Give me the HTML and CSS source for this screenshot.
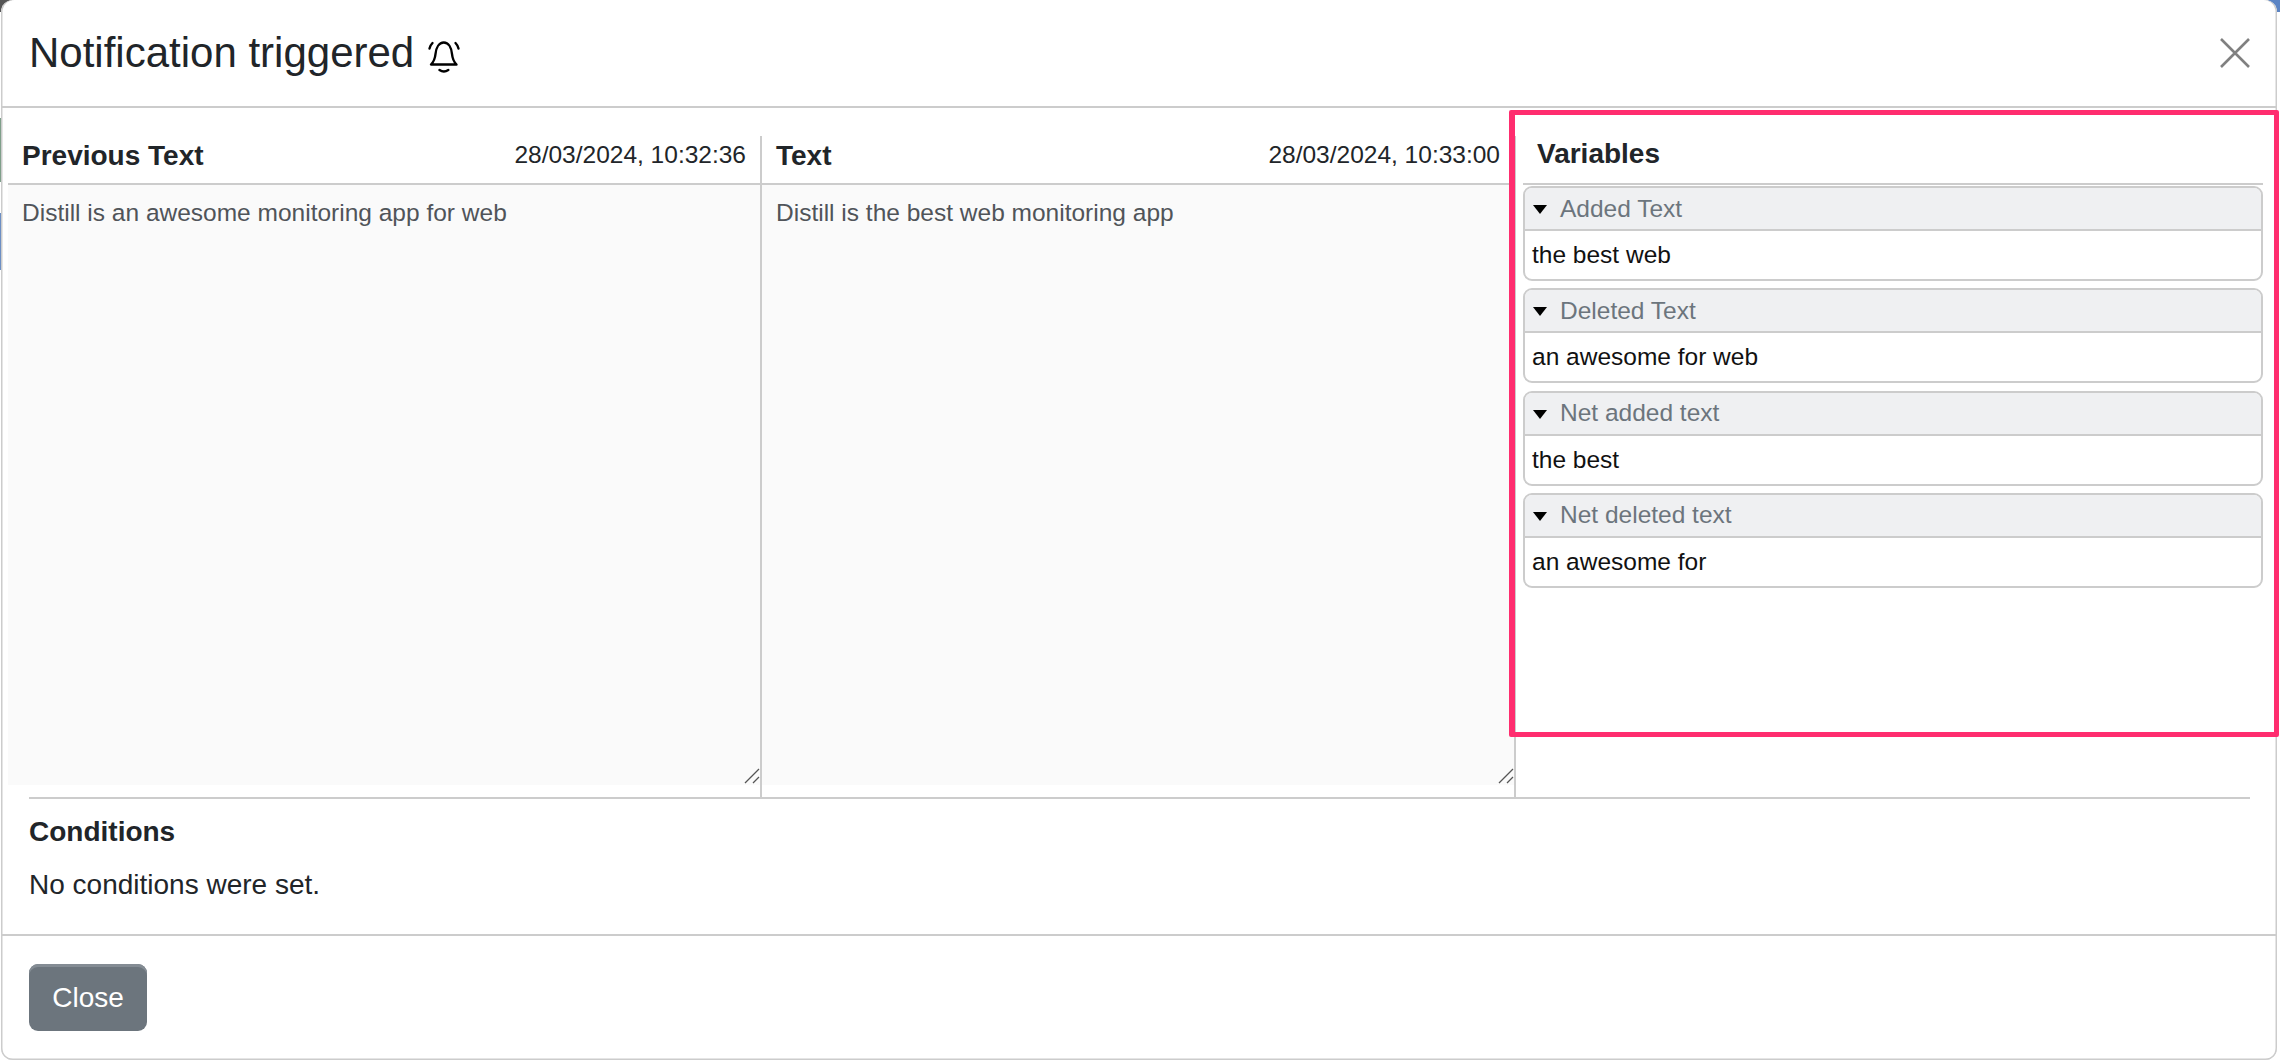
FILE: index.html
```html
<!DOCTYPE html>
<html lang="en">
<head>
<meta charset="utf-8">
<title>Notification triggered</title>
<link rel="stylesheet" href="styles.css">
</head>
<body>
<div class="modal">
  <header class="modal-header">
    <h1 class="modal-title">Notification triggered
      <svg class="bell" viewBox="0 0 32 33" width="32" height="33" fill="none" stroke="#000" stroke-width="2.400" stroke-linecap="round" stroke-linejoin="round">
        <path d="M3 24.500h25.500c-2.500-2.500-4-5.500-4.500-10.500C23.400 7.500 20.500 2.500 15.800 2.500S8.100 7.500 7.500 14C7 19 5.500 22 3 24.500z"/>
        <path d="M11.500 30c2.800 2 6 2 8.800 0"/>
        <path d="M1.500 8.500c.5-2.200 1.500-4 3-5.500"/>
        <path d="M30.500 8.500c-.5-2.200-1.500-4-3-5.500"/>
      </svg>
    </h1>
    <svg class="close-x" viewBox="0 0 30 30" width="30" height="30" fill="none" stroke="#808080" stroke-width="2.600" aria-label="Close">
      <path d="M1 1l28 28M29 1L1 29"/>
    </svg>
  </header>
  <section class="panes">
    <div class="pane">
      <div class="pane-head"><b class="pane-title">Previous Text</b><span class="stamp">28/03/2024, 10:32:36</span></div>
      <div class="text-box">Distill is an awesome monitoring app for web
        <svg class="grip" viewBox="0 0 16 16" width="16" height="16" stroke="#555" stroke-width="1.300" fill="none"><path d="M1 15L15 1M9 15l6-6"/></svg>
      </div>
    </div>
    <div class="pane">
      <div class="pane-head"><b class="pane-title">Text</b><span class="stamp">28/03/2024, 10:33:00</span></div>
      <div class="text-box">Distill is the best web monitoring app
        <svg class="grip" viewBox="0 0 16 16" width="16" height="16" stroke="#555" stroke-width="1.300" fill="none"><path d="M1 15L15 1M9 15l6-6"/></svg>
      </div>
    </div>
    <div class="vars">
      <div class="vars-head">Variables</div>
      <div class="var"><div class="var-head"><i class="tri"></i>Added Text</div><div class="var-body">the best web</div></div>
      <div class="var"><div class="var-head"><i class="tri"></i>Deleted Text</div><div class="var-body">an awesome for web</div></div>
      <div class="var"><div class="var-head"><i class="tri"></i>Net added text</div><div class="var-body">the best</div></div>
      <div class="var"><div class="var-head"><i class="tri"></i>Net deleted text</div><div class="var-body">an awesome for</div></div>
    </div>
  </section>
  <section class="conditions">
    <h2 class="cond-title">Conditions</h2>
    <p class="cond-text">No conditions were set.</p>
  </section>
  <footer class="modal-footer"><button class="btn" type="button">Close</button></footer>
  <div class="highlight"></div>
</div>
</body>
</html>
```
FILE: styles.css
```css
* { box-sizing: border-box; }
html, body { margin: 0; height: 100%; }
body {
  background-color: #fff;
  background-image:
    linear-gradient(#555, #555),
    linear-gradient(#5b84c4, #5b84c4),
    linear-gradient(#7f9f8a, #7f9f8a),
    linear-gradient(#6d8fc4, #6d8fc4);
  background-repeat: no-repeat;
  background-size: 12px 12px, 12px 12px, 1px 64px, 1px 57px;
  background-position: 0 0, 2268px 0, 0 118px, 0 213px;
  font-family: "Liberation Sans", Arial, sans-serif;
  color: #212529;
  overflow: hidden;
}
.modal {
  position: relative;
  width: 2276px;
  height: 1060px;
  margin-left: 1px;
  background: #fff;
  border-radius: 12px;
  box-shadow: inset 1.500px 0 0 #ccc, inset -1.500px 0 0 #ccc, inset 0 -1.500px 0 #ccc;
  display: flex;
  flex-direction: column;
}
.modal-header {
  height: 108px;
  flex: none;
  border-bottom: 2px solid #ccc;
  display: flex;
  align-items: center;
  justify-content: space-between;
  padding: 0 27px 0 28px;
}
.modal-title {
  margin: 0;
  font-size: 42px;
  font-weight: 400;
  line-height: 48px;
  display: flex;
  align-items: center;
  gap: 14px;
  white-space: nowrap;
}
.bell { flex: none; margin-top: 6px; }
.close-x { flex: none; }
.panes {
  flex: none;
  height: 689px;
  padding: 28px 0 0 7px;
  display: grid;
  grid-template-columns: 754px 754px 1fr;
}
.pane {
  border-right: 2px solid #ccc;
  display: flex;
  flex-direction: column;
}
.pane-head {
  height: 49px;
  flex: none;
  border-bottom: 2px solid #ccc;
  display: flex;
  align-items: center;
  justify-content: space-between;
  padding: 0 16px 10px 14px;
  margin-right: -2px;
}
.pane-title { font-size: 28px; font-weight: 700; margin-top: 2px; }
.stamp { font-size: 24.500px; }
.text-box {
  position: relative;
  height: 600px;
  background: #fafafa;
  padding: 14px;
  font-size: 24.500px;
  line-height: 28px;
  color: #505459;
  margin-bottom: 12px;
}
.grip { position: absolute; right: 0; bottom: 1px; }
.vars { padding: 0 14px 0 7px; }
.vars-head {
  height: 49px;
  border-bottom: 2px solid #ccc;
  padding: 0 0 11px 14px;
  display: flex;
  align-items: center;
  font-size: 28px;
  font-weight: 700;
  margin-bottom: 1px;
}
.var {
  height: 95px;
  margin-bottom: 7.300px;
  border: 2px solid #ccc;
  border-radius: 9px;
  overflow: hidden;
  display: flex;
  flex-direction: column;
}
.var-head {
  height: 43px;
  flex: none;
  background: #eff0f2;
  border-bottom: 2px solid #ccc;
  color: #6c757d;
  font-size: 24.500px;
  display: flex;
  align-items: center;
  padding-left: 8px;
}
.tri {
  width: 0;
  height: 0;
  border-left: 7px solid transparent;
  border-right: 7px solid transparent;
  border-top: 9px solid #000;
  margin: 2px 13px 0 0;
}
.var-body {
  flex: 1;
  display: flex;
  align-items: center;
  padding-left: 7px;
  font-size: 24.500px;
  color: #111;
}
.conditions {
  flex: 1;
  padding: 0 28px;
}
.cond-title {
  margin: 0;
  padding-top: 16px;
  border-top: 2px solid #ccc;
  width: 2221px;
  font-size: 28px;
  line-height: 34px;
  font-weight: 700;
}
.cond-text { margin: 19px 0 0; font-size: 28px; line-height: 34px; }
.modal-footer {
  flex: none;
  height: 126px;
  border-top: 2px solid #ccc;
  padding: 28px 28px 0;
}
.btn {
  display: block;
  width: 118px;
  height: 67px;
  border: 0;
  border-radius: 9px;
  background: #6c757d;
  box-shadow: inset 0 3px 0 #848c94;
  color: #fff;
  font: 400 28px "Liberation Sans", Arial, sans-serif;
}
.highlight {
  position: absolute;
  left: 1508px;
  top: 110px;
  width: 770px;
  height: 627px;
  border: 5px solid #ff2d6f;
  border-left-width: 6px;
  border-radius: 2px;
  pointer-events: none;
}
```
